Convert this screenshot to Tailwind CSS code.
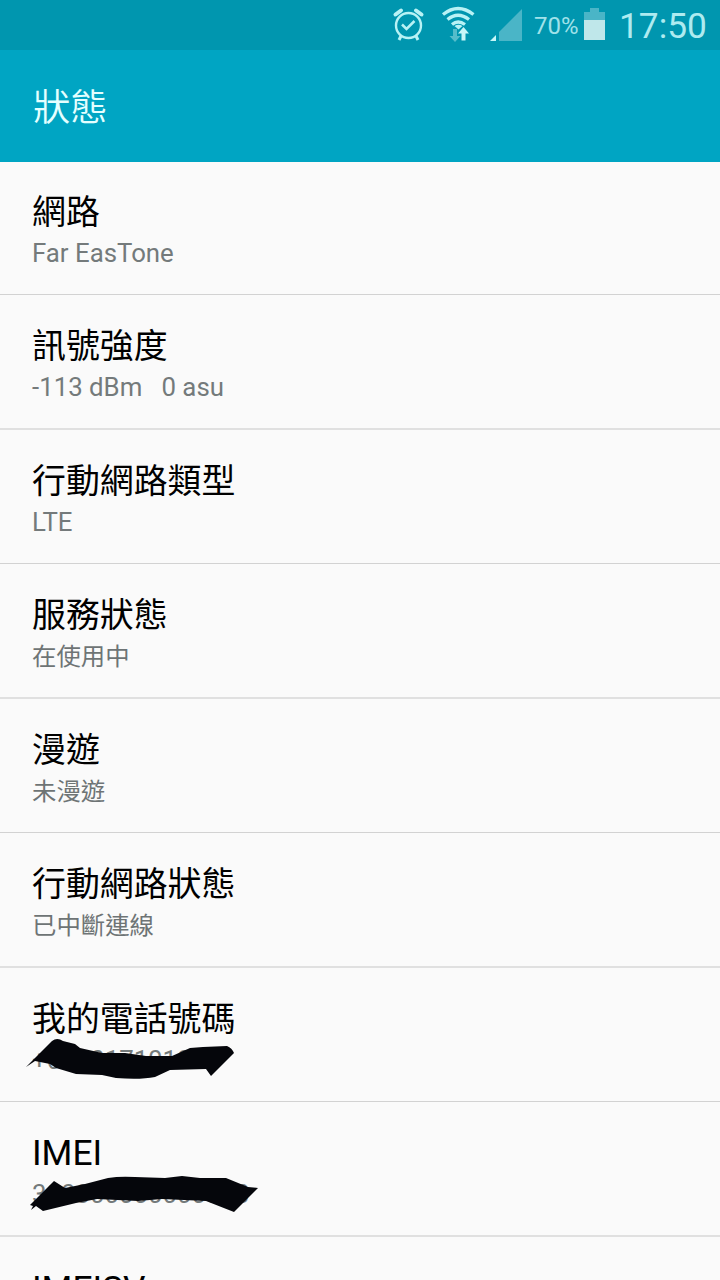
<!DOCTYPE html>
<html lang="zh-Hant">
<head>
<meta charset="utf-8">
<title>狀態</title>
<script src="https://cdn.jsdelivr.net/npm/@tailwindcss/browser@4"></script>
</head>
<body class="w-[720px] h-[1280px] overflow-hidden bg-[#fafafa] font-['Roboto','Noto_Sans_CJK_TC',sans-serif] text-black">
<div class="flex h-[50px] items-center bg-[#0096af] pl-[392px] text-[#c0f3f5]">
  <svg class="h-[50px] w-[232px] shrink-0" viewBox="392 0 232 50" fill="none">
    <g stroke="#b8f2f5">
      <circle cx="408.500" cy="25.500" r="12.500" stroke-width="2.400"/>
      <path d="M402 24.500l4.500 4.500 8-8" stroke-width="2.500"/>
      <path d="M401 36l-2 4M416 36l2 4" stroke-width="3"/>
      <path d="M395.500 14.500l5.500-4M421.500 14.500l-5.500-4" stroke-width="4" stroke-linecap="round"/>
      <path d="M443 14.500Q458 2.500 473.500 14.500M447.500 19.500Q458 11 469 19.500M452 24.500Q458 19.500 465 24.500" stroke-width="3.300"/>
    </g>
    <path d="M454.500 26Q458.500 23.500 462.500 26L458.500 29.500Z" fill="#b8f2f5"/>
    <path d="M453 29h4v7h3.500l-5.500 6-5.500-6h3.500Z" fill="#55bdca"/>
    <path d="M461.500 40.500v-7h-3.500l5.500-6.500 5.500 6.500h-3.500v7Z" fill="#c8f6f8"/>
    <path d="M522 9v32h-23v-9Z" fill="#4ab5c7"/>
    <path d="M496 35v6h-6Z" fill="#c8f6f8"/>
    <text x="534" y="33.500" font-size="24" textLength="44.500" lengthAdjust="spacingAndGlyphs" fill="#a0e2ea">70%</text>
    <path d="M584 20v-8h6v-4h9v4h6v8Z" fill="#4ab5c7"/>
    <path d="M584 20h21v20h-21Z" fill="#bfe7ea"/>
  </svg>
  <span class="ml-[-5px] pt-[2px] text-[35.300px] leading-[50px] text-[#aeebf0]">17:50</span>
</div>
<header class="flex h-[112px] items-center bg-[#00a5c3] pl-[33px] pt-[5px] text-[37.300px] text-[#e4ffff]"><h1 class="font-[350]">狀態</h1></header>
<main>
  <section class="h-[133px] border-b border-[#d2d2d2] pl-8 pt-[30px]"><h2 class="text-[33.900px] leading-[42px]">網路</h2><p class="text-[25.800px] leading-[38px] text-[#747a7b]">Far EasTone</p></section>
  <section class="h-[135px] border-b-2 border-[#e0e0e0] pl-8 pt-[31px]"><h2 class="text-[33.900px] leading-[42px]">訊號強度</h2><p class="whitespace-pre text-[25.800px] leading-[38px] text-[#747a7b]">-113 dBm   0 asu</p></section>
  <section class="h-[134px] border-b border-[#d2d2d2] pl-8 pt-[31px]"><h2 class="text-[33.900px] leading-[42px]">行動網路類型</h2><p class="text-[25.800px] leading-[38px] text-[#747a7b]">LTE</p></section>
  <section class="h-[135px] border-b-2 border-[#e0e0e0] pl-8 pt-[31px]"><h2 class="text-[33.900px] leading-[42px]">服務狀態</h2><p class="text-[24.400px] leading-[40px] text-[#6e7475]">在使用中</p></section>
  <section class="h-[134px] border-b border-[#d2d2d2] pl-8 pt-[31px]"><h2 class="text-[33.900px] leading-[42px]">漫遊</h2><p class="text-[24.400px] leading-[40px] text-[#6e7475]">未漫遊</p></section>
  <section class="h-[135px] border-b-2 border-[#e0e0e0] pl-8 pt-[31px]"><h2 class="text-[33.900px] leading-[42px]">行動網路狀態</h2><p class="text-[24.400px] leading-[40px] text-[#6e7475]">已中斷連線</p></section>
  <section class="relative h-[134px] border-b border-[#d2d2d2] pl-8 pt-[31px]"><h2 class="text-[33.900px] leading-[42px]">我的電話號碼</h2><p class="text-[25.800px] leading-[38px] text-[#747a7b]">+000017101000</p>
    <svg class="absolute left-0 top-[62px] h-[60px] w-[280px]" viewBox="0 1030 280 60"><path d="M26 1067L52 1041Q57 1037 63 1041L75 1044 80 1048 102 1053 125 1053 146 1056 172 1056 190 1048 203 1047 227 1046Q232 1048 234 1053L211 1076 206 1069 170 1070 155 1077Q140 1080 116 1078L102 1075 76 1074 56 1068 50 1064 35 1061Z" fill="#05060b"/></svg>
  </section>
  <section class="relative h-[135px] border-b-2 border-[#e0e0e0] pl-8 pt-[30px]"><h2 class="text-[35.300px] leading-[43px]">IMEI</h2><p class="text-[25.800px] leading-[38px] text-[#747a7b]">300000000000000</p>
    <svg class="absolute left-0 top-[58px] h-[60px] w-[280px]" viewBox="0 1160 280 60"><path d="M30 1205L54 1181 65 1188 85 1184 108 1178Q120 1176 135 1177L165 1178 182 1176 200 1178 226 1178 248 1187 258 1188 234 1212 206 1201 162 1199 138 1201 97 1199 76 1203 43 1211 36 1206 31 1210 33 1206Z" fill="#05060b"/></svg>
  </section>
  <section class="h-[43px] overflow-hidden pl-8 pt-[31px]"><h2 class="text-[35.300px] leading-[42px]">IMEISV</h2></section>
</main>
</body>
</html>
